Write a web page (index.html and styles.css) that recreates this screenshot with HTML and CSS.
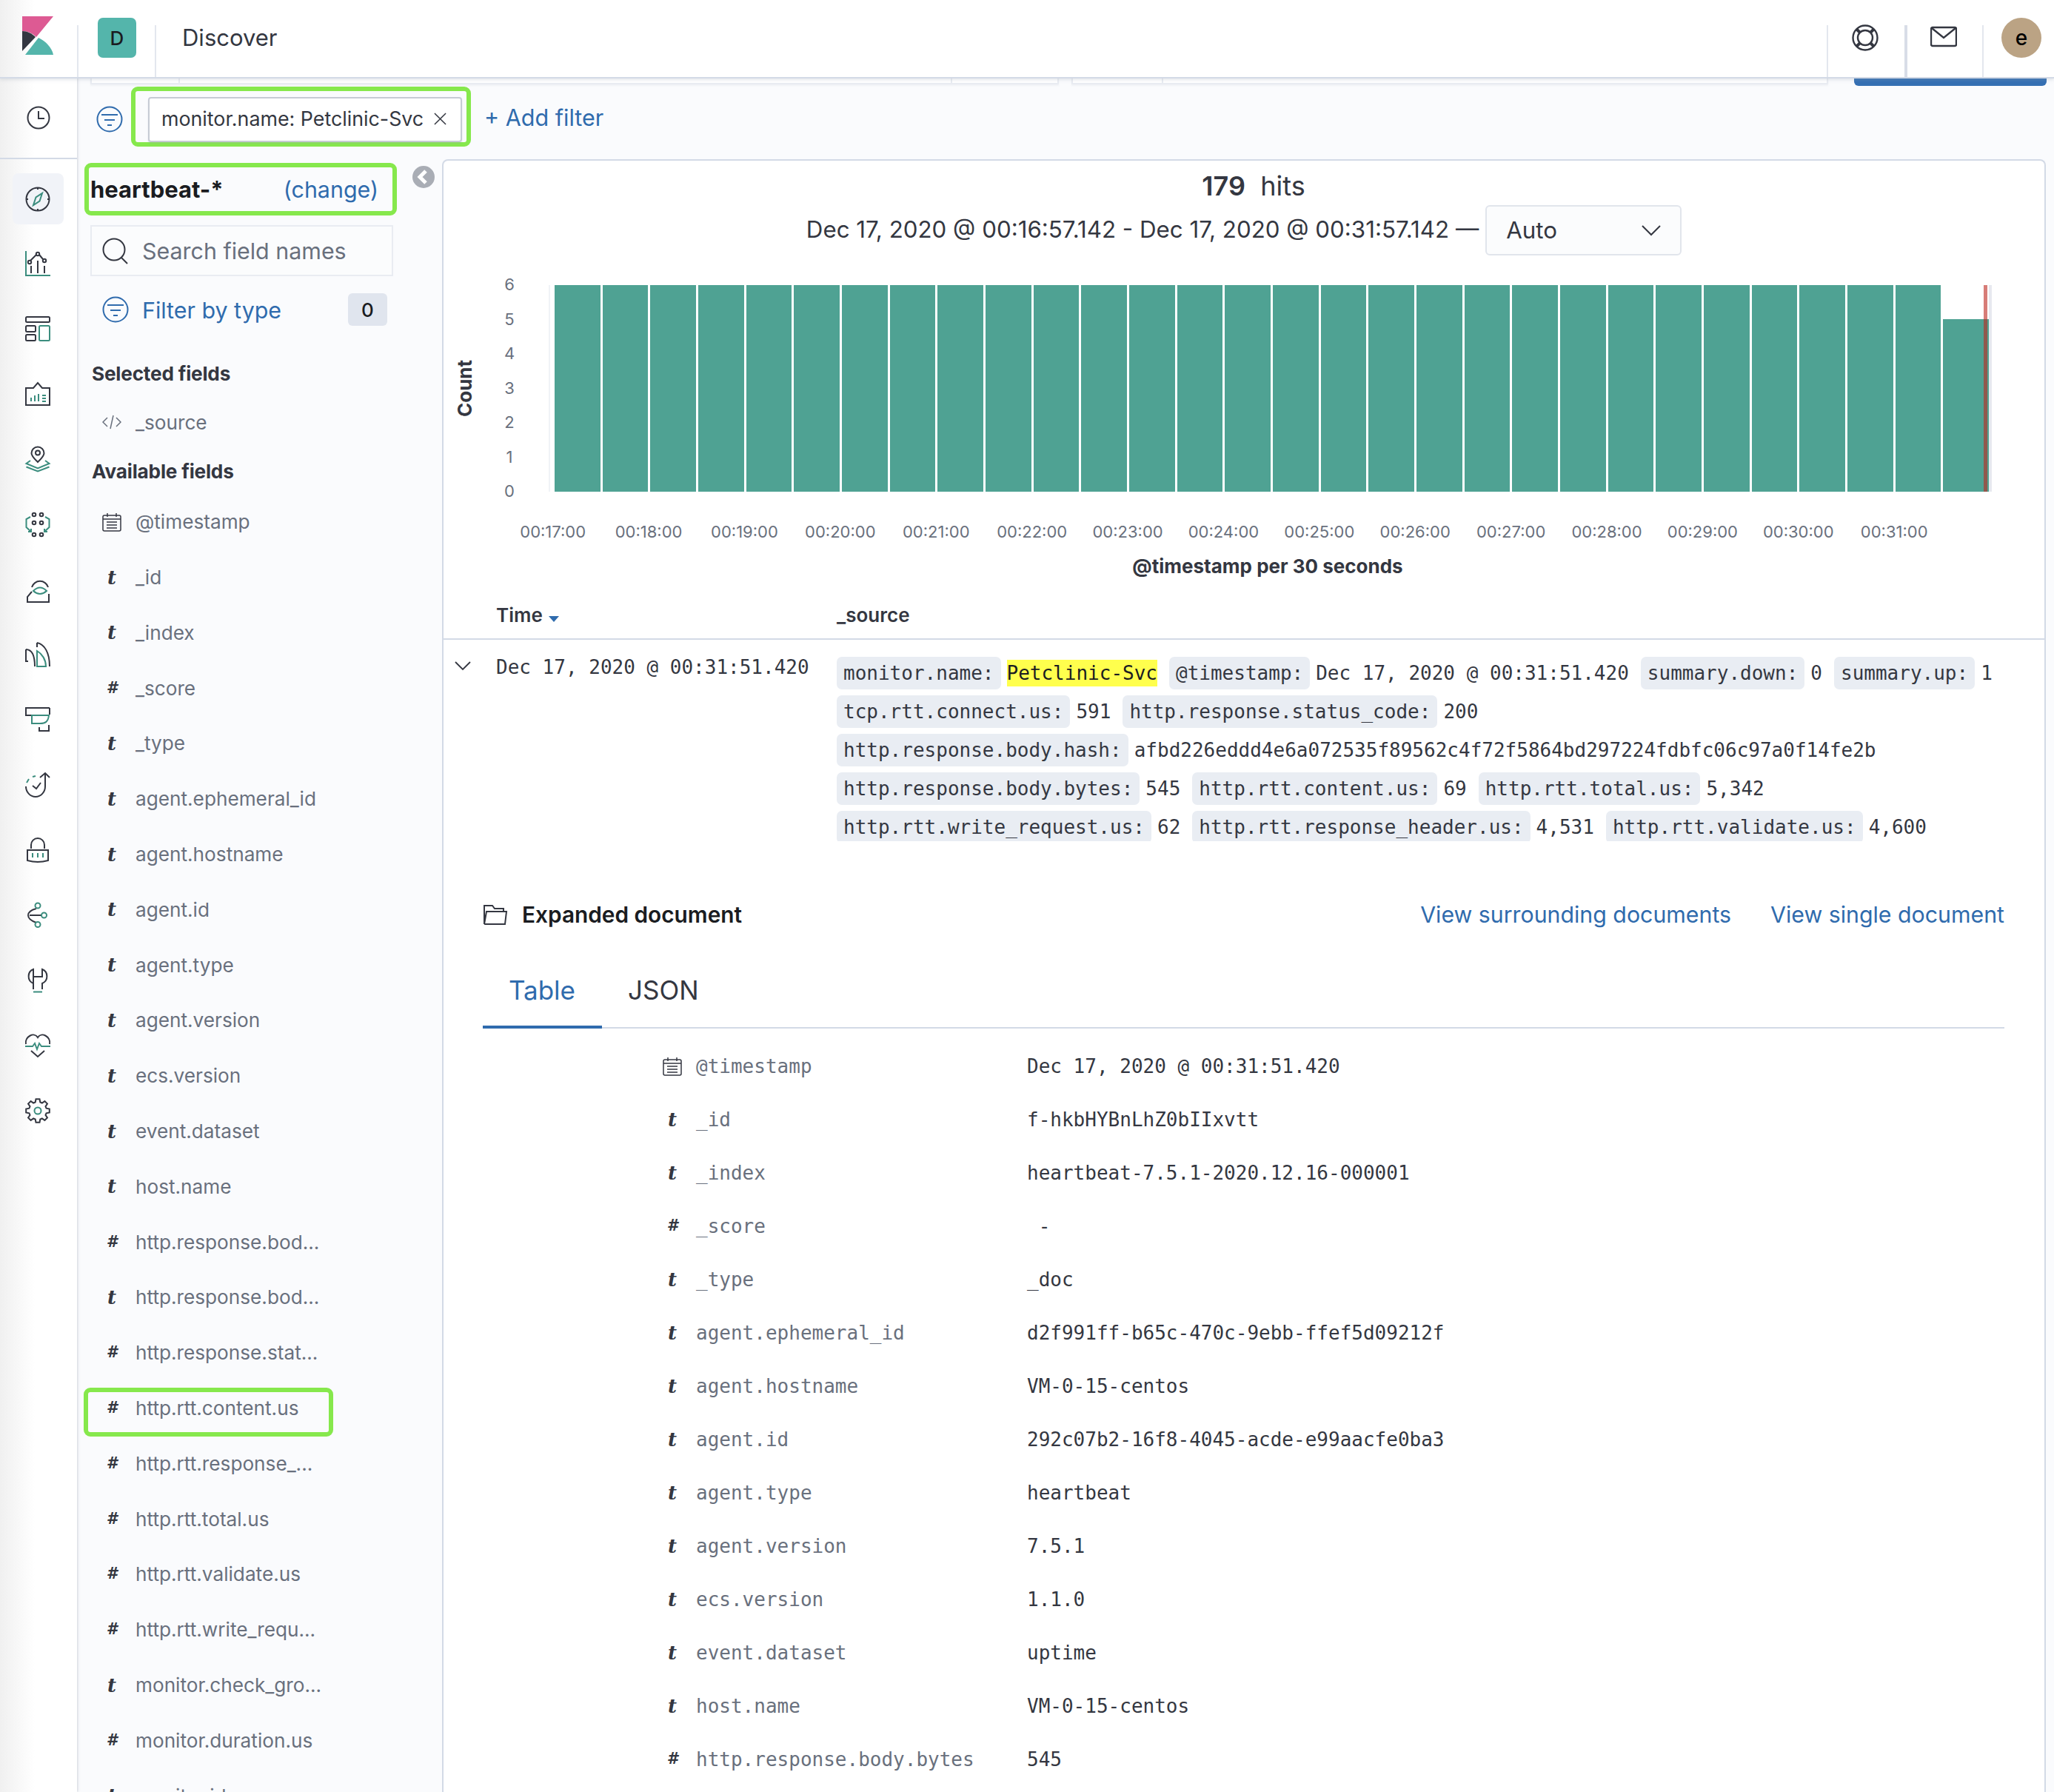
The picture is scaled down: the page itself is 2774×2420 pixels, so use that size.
FILE: index.html
```html
<!DOCTYPE html>
<html>
<head>
<meta charset="UTF-8">
<title>Discover - Kibana</title>
<link rel="stylesheet" href="styles.css">
</head>
<body>
<div class="page">

<header class="topbar">
<div class="logo-cell">
<svg class="logo" viewBox="0 0 42 52"><path fill="#dd5a93" d="M0 0H42L19 28C14 23 8 20 0 20Z"/><path fill="#343741" d="M0 20C7 20 13 23 18 28L0 47Z"/><path fill="#54b5ab" d="M22 29C32 34 40 42 42 52H4Z"/></svg>
</div>
<div class="space-cell"><div class="space-tile">D</div></div>
<div class="page-title">Discover</div>
<div class="top-spacer"></div>
<div class="top-cell"><svg class="top-icon help" viewBox="0 0 36 36"><circle cx="18" cy="18" r="16.5"/><circle cx="18" cy="18" r="10"/><path d="M6.500 6.500L11 11M29.500 6.500L25 11M6.500 29.500L11 25M29.500 29.500L25 25" stroke-width="4"/></svg></div>
<div class="top-cell thick"><svg class="top-icon mail" viewBox="0 0 36 30"><rect x="1" y="2" width="34" height="25" rx="2"/><path d="M2 3L18 16L34 3"/></svg></div>
<div class="top-cell avatar-cell"><div class="avatar">e</div></div>
</header>

<div class="workspace">
<nav class="sidenav">
<div class="nav-recent">
<svg class="nav-icon" viewBox="0 0 34 34"><circle cx="17" cy="17" r="14.5"/><path d="M17 8V18H25"/></svg>
</div>
<div class="nav-list">
<div class="nav-item active"><svg class="nav-icon" viewBox="0 0 34 34"><circle cx="17" cy="17" r="15.5"/><path d="M17 1V4M17 30V33M1 17H4M30 17H33"/><path class="teal" d="M23 9L19.5 19.5L11 25L14.5 14.5Z"/></svg></div>
<div class="nav-item"><svg class="nav-icon" viewBox="0 0 34 34"><path class="teal" d="M1 0V33H34"/><path d="M8 30V20M17 30V13M26 30V20"/><path d="M7 13L15 5M19 5L24 11"/><circle cx="6" cy="15" r="2.2"/><circle cx="17" cy="4" r="2.2"/><circle cx="26" cy="13" r="2.2"/></svg></div>
<div class="nav-item"><svg class="nav-icon" viewBox="0 0 34 34"><rect x="1" y="1" width="32" height="7" rx="1.5"/><rect x="1" y="13" width="13" height="8" rx="1.5"/><rect x="1" y="25" width="13" height="8" rx="1.5"/><rect class="teal" x="19" y="13" width="14" height="20" rx="1.5"/></svg></div>
<div class="nav-item"><svg class="nav-icon" viewBox="0 0 34 34"><path d="M1 9H11L17 2L23 9H33V32H1Z"/><path class="teal" d="M8 22V27M13 19V27M18 17V27M23 19H28M23 23H28M23 27H28"/></svg></div>
<div class="nav-item"><svg class="nav-icon" viewBox="0 0 34 34"><path d="M17 21C12 16 8.5 13 8.5 9A8.5 8.5 0 0 1 25.500 9C25.500 13 22 16 17 21Z"/><circle cx="17" cy="8.500" r="3"/><path class="teal" d="M7 19L1.500 23L17 29.500L32.500 23L27 19M1.500 27.500L17 33.500L32.500 27.500"/></svg></div>
<div class="nav-item"><svg class="nav-icon" viewBox="0 0 34 34"><circle cx="12" cy="4" r="2.300"/><circle cx="22" cy="4" r="2.300"/><circle cx="12" cy="15" r="2.300"/><circle cx="22" cy="15" r="2.300"/><circle cx="12" cy="31" r="2.300"/><circle cx="22" cy="31" r="2.300"/><path class="teal" d="M7 7L1.500 10V21L8 27M4 27H8V23M27 7L32.500 10V21L26 27M30 27H26V23"/></svg></div>
<div class="nav-item"><svg class="nav-icon" viewBox="0 0 34 34"><path d="M9 14A11.500 11.500 0 0 1 31 14M9 20L3 27V34H32V23"/><path class="teal" d="M11 19Q20 10 29 19Q20 27 11 19Z"/></svg></div>
<div class="nav-item"><svg class="nav-icon" viewBox="0 0 34 34"><path d="M1 10V26H4M1 10C8 10 13 17 13 33M16 1V7M16 1C26 3 33 14 33 33"/><path class="teal" d="M16 12V33H28C28 24 23 16 16 12Z"/></svg></div>
<div class="nav-item"><svg class="nav-icon" viewBox="0 0 34 34"><path d="M33 1H1V11H10M33 1V10M19 27V32H32V24"/><path class="teal" d="M9 11H32C31 20 27 22 20 22H9Z"/></svg></div>
<div class="nav-item"><svg class="nav-icon" viewBox="0 0 34 34"><path d="M20 7L27 1L33 7M27 1V19A13 14 0 0 1 1 19"/><path class="teal" d="M2 14L5 9M10 6L14 5"/><path d="M10 18L15 22L21 14"/></svg></div>
<div class="nav-item"><svg class="nav-icon" viewBox="0 0 34 34"><path d="M8 15V10A9 9 0 0 1 26 10V15M3 17H31V31Q17 35 3 31Z"/><path class="teal" d="M10 21V27M17 21V27M24 21V27"/></svg></div>
<div class="nav-item"><svg class="nav-icon" viewBox="0 0 34 34"><path d="M22 17H6M15 8Q4 11 4 17Q4 23 15 27"/><circle class="teal" cx="17" cy="4" r="3.500"/><circle class="teal" cx="25.500" cy="17" r="3.500"/><circle class="teal" cx="17" cy="29.500" r="3.500"/></svg></div>
<div class="nav-item"><svg class="nav-icon" viewBox="0 0 34 34"><path d="M11 2V12H23V2C31 5 32 17 23 21V29M11 29V21C2 17 3 5 11 2Z"/><path class="teal" d="M11 32.500H23"/></svg></div>
<div class="nav-item"><svg class="nav-icon" viewBox="0 0 34 34"><path d="M1 15C-1 5 12 -2 17 6C22 -2 35 5 33 15M8 24L17 32L26 24"/><path class="teal" d="M0 18H10L13 14L16 22L19 14L22 18H34"/></svg></div>
<div class="nav-item"><svg class="nav-icon" viewBox="0 0 34 34"><path d="M13.690 5.460L14.500 1.200H19.500L20.310 5.460L22.820 6.500L26.400 4.060L29.940 7.600L27.500 11.180L28.540 13.690L32.800 14.500V19.500L28.540 20.310L27.500 22.820L29.940 26.400L26.400 29.940L22.820 27.500L20.310 28.540L19.500 32.800H14.500L13.690 28.540L11.180 27.500L7.600 29.940L4.060 26.400L6.500 22.820L5.460 20.310L1.200 19.500V14.500L5.460 13.690L6.500 11.180L4.060 7.600L7.600 4.060L11.180 6.500Z"/><circle class="teal" cx="17" cy="17" r="4.500"/></svg></div>
</div>
</nav>

<main class="main">
<div class="query-stub">
<div class="query-box"><span class="stub-a"></span><span class="stub-b"></span></div>
<div class="query-box second"><span class="stub-c"></span></div>
<div class="update-btn"></div>
</div>

<div class="filter-row">
<svg class="filter-icon" viewBox="0 0 36 36"><circle cx="18" cy="18" r="16.500"/><path d="M7 12H29M11 19H25M15 26H21"/></svg>
<div class="green-box filter-green">
<div class="filter-chip">
<span class="chip-text">monitor.name: Petclinic-Svc</span>
<svg class="chip-x" viewBox="0 0 18 18"><path d="M1 1L17 17M17 1L1 17"/></svg>
</div>
</div>
<a class="add-filter">+ Add filter</a>
</div>

<div class="content">
<aside class="sidebar">
<div class="collapse-btn"><svg viewBox="0 0 30 30"><path d="M18 7L10 15L18 23"/></svg></div>
<div class="green-box index-green">
<span class="index-name">heartbeat-*</span>
<a class="index-change">(change)</a>
</div>
<div class="field-search">
<svg class="search-icon" viewBox="0 0 36 36"><circle cx="16" cy="16" r="14.500"/><path d="M26 27L34 35"/></svg>
<span>Search field names</span>
</div>
<div class="type-filter">
<svg class="filter-icon" viewBox="0 0 36 36"><circle cx="18" cy="18" r="16.500"/><path d="M7 12H29M11 19H25M15 26H21"/></svg>
<a class="type-label">Filter by type</a>
<span class="type-count">0</span>
</div>

<h3 class="field-head selected-head">Selected fields</h3>
<div class="field-row"><svg class="code-icon" viewBox="0 0 26 20"><path d="M7 4L1 10L7 16M19 4L25 10L19 16M15 1L11 19"/></svg><span class="field-name">_source</span></div>
<h3 class="field-head available-head">Available fields</h3>

<div class="field-list">
<div class="field-row"><svg class="cal-icon" viewBox="0 0 26 26"><rect x="1" y="4" width="24" height="21" rx="2"/><path d="M7 1V6M19 1V6M1 9H25M6 13H20M6 17H20M6 21H20"/></svg><span class="field-name">@timestamp</span></div>
<div class="field-row"><span class="type-t">t</span><span class="field-name">_id</span></div>
<div class="field-row"><span class="type-t">t</span><span class="field-name">_index</span></div>
<div class="field-row"><span class="type-n">#</span><span class="field-name">_score</span></div>
<div class="field-row"><span class="type-t">t</span><span class="field-name">_type</span></div>
<div class="field-row"><span class="type-t">t</span><span class="field-name">agent.ephemeral_id</span></div>
<div class="field-row"><span class="type-t">t</span><span class="field-name">agent.hostname</span></div>
<div class="field-row"><span class="type-t">t</span><span class="field-name">agent.id</span></div>
<div class="field-row"><span class="type-t">t</span><span class="field-name">agent.type</span></div>
<div class="field-row"><span class="type-t">t</span><span class="field-name">agent.version</span></div>
<div class="field-row"><span class="type-t">t</span><span class="field-name">ecs.version</span></div>
<div class="field-row"><span class="type-t">t</span><span class="field-name">event.dataset</span></div>
<div class="field-row"><span class="type-t">t</span><span class="field-name">host.name</span></div>
<div class="field-row"><span class="type-n">#</span><span class="field-name">http.response.bod...</span></div>
<div class="field-row"><span class="type-t">t</span><span class="field-name">http.response.bod...</span></div>
<div class="field-row"><span class="type-n">#</span><span class="field-name">http.response.stat...</span></div>
<div class="field-row picked">
<div class="green-box field-green"></div>
<span class="type-n">#</span><span class="field-name">http.rtt.content.us</span></div>
<div class="field-row"><span class="type-n">#</span><span class="field-name">http.rtt.response_...</span></div>
<div class="field-row"><span class="type-n">#</span><span class="field-name">http.rtt.total.us</span></div>
<div class="field-row"><span class="type-n">#</span><span class="field-name">http.rtt.validate.us</span></div>
<div class="field-row"><span class="type-n">#</span><span class="field-name">http.rtt.write_requ...</span></div>
<div class="field-row"><span class="type-t">t</span><span class="field-name">monitor.check_gro...</span></div>
<div class="field-row"><span class="type-n">#</span><span class="field-name">monitor.duration.us</span></div>
<div class="field-row"><span class="type-t">t</span><span class="field-name">monitor.id</span></div>
</div>
</aside>

<section class="panel">
<div class="hits"><b>179</b>&nbsp; hits</div>
<div class="range-row">
<span class="range-text">Dec 17, 2020 @ 00:16:57.142 - Dec 17, 2020 @ 00:31:57.142 —</span>
<div class="interval"><span>Auto</span><svg class="interval-arrow" viewBox="0 0 28 16"><path d="M2 2L14 14L26 2"/></svg></div>
</div>

<div class="chart">
<div class="count-label"><span>Count</span></div>
<div class="y-ticks"><span>6</span><span>5</span><span>4</span><span>3</span><span>2</span><span>1</span><span>0</span></div>
<div class="plot-wrap">
<div class="plot">
<i></i><i></i><i></i><i></i><i></i><i></i><i></i><i></i><i></i><i></i>
<i></i><i></i><i></i><i></i><i></i><i></i><i></i><i></i><i></i><i></i>
<i></i><i></i><i></i><i></i><i></i><i></i><i></i><i></i><i></i>
<i class="partial"></i>
<div class="now-line"></div>
</div>
<div class="x-ticks">
<span>00:17:00</span><span>00:18:00</span><span>00:19:00</span><span>00:20:00</span><span>00:21:00</span>
<span>00:22:00</span><span>00:23:00</span><span>00:24:00</span><span>00:25:00</span><span>00:26:00</span>
<span>00:27:00</span><span>00:28:00</span><span>00:29:00</span><span>00:30:00</span><span>00:31:00</span>
</div>
</div>
</div>
<div class="x-title">@timestamp per 30 seconds</div>

<div class="hit-head"><div class="hit-time">Time <span class="sort-arrow"></span></div><div>_source</div></div>
<div class="hit-row">
<svg class="hit-toggle" viewBox="0 0 22 14"><path d="M1 2L11 12L21 2"/></svg>
<div class="hit-date">Dec 17, 2020 @ 00:31:51.420</div>
<div class="source">
<div class="kv"><span class="key">monitor.name:</span><mark>Petclinic-Svc</mark></div>
<div class="kv"><span class="key">@timestamp:</span><span>Dec 17, 2020 @ 00:31:51.420</span></div>
<div class="kv"><span class="key">summary.down:</span><span>0</span></div>
<div class="kv"><span class="key">summary.up:</span><span>1</span></div>
<div class="kv"><span class="key">tcp.rtt.connect.us:</span><span>591</span></div>
<div class="kv"><span class="key">http.response.status_code:</span><span>200</span></div>
<div class="kv"><span class="key">http.response.body.hash:</span><span>afbd226eddd4e6a072535f89562c4f72f5864bd297224fdbfc06c97a0f14fe2b</span></div>
<div class="kv"><span class="key">http.response.body.bytes:</span><span>545</span></div>
<div class="kv"><span class="key">http.rtt.content.us:</span><span>69</span></div>
<div class="kv"><span class="key">http.rtt.total.us:</span><span>5,342</span></div>
<div class="kv"><span class="key">http.rtt.write_request.us:</span><span>62</span></div>
<div class="kv"><span class="key">http.rtt.response_header.us:</span><span>4,531</span></div>
<div class="kv"><span class="key">http.rtt.validate.us:</span><span>4,600</span></div>
</div>
</div>

<div class="doc">
<div class="doc-head">
<svg class="folder-icon" viewBox="0 0 34 30"><path d="M2 28V3H13L16 7H28V11M2 28H30L32 11H5L2 28"/></svg>
<span class="doc-title">Expanded document</span>
<a class="doc-link first">View surrounding documents</a>
<a class="doc-link">View single document</a>
</div>
<div class="tabs"><a class="tab on">Table</a><a class="tab">JSON</a></div>
<div class="doc-table">
<div class="doc-row"><svg class="cal-icon" viewBox="0 0 26 26"><rect x="1" y="4" width="24" height="21" rx="2"/><path d="M7 1V6M19 1V6M1 9H25M6 13H20M6 17H20M6 21H20"/></svg><span class="doc-key">@timestamp</span><span class="doc-val">Dec 17, 2020 @ 00:31:51.420</span></div>
<div class="doc-row"><span class="type-t">t</span><span class="doc-key">_id</span><span class="doc-val">f-hkbHYBnLhZ0bIIxvtt</span></div>
<div class="doc-row"><span class="type-t">t</span><span class="doc-key">_index</span><span class="doc-val">heartbeat-7.5.1-2020.12.16-000001</span></div>
<div class="doc-row"><span class="type-n">#</span><span class="doc-key">_score</span><span class="doc-val"> -</span></div>
<div class="doc-row"><span class="type-t">t</span><span class="doc-key">_type</span><span class="doc-val">_doc</span></div>
<div class="doc-row"><span class="type-t">t</span><span class="doc-key">agent.ephemeral_id</span><span class="doc-val">d2f991ff-b65c-470c-9ebb-ffef5d09212f</span></div>
<div class="doc-row"><span class="type-t">t</span><span class="doc-key">agent.hostname</span><span class="doc-val">VM-0-15-centos</span></div>
<div class="doc-row"><span class="type-t">t</span><span class="doc-key">agent.id</span><span class="doc-val">292c07b2-16f8-4045-acde-e99aacfe0ba3</span></div>
<div class="doc-row"><span class="type-t">t</span><span class="doc-key">agent.type</span><span class="doc-val">heartbeat</span></div>
<div class="doc-row"><span class="type-t">t</span><span class="doc-key">agent.version</span><span class="doc-val">7.5.1</span></div>
<div class="doc-row"><span class="type-t">t</span><span class="doc-key">ecs.version</span><span class="doc-val">1.1.0</span></div>
<div class="doc-row"><span class="type-t">t</span><span class="doc-key">event.dataset</span><span class="doc-val">uptime</span></div>
<div class="doc-row"><span class="type-t">t</span><span class="doc-key">host.name</span><span class="doc-val">VM-0-15-centos</span></div>
<div class="doc-row"><span class="type-n">#</span><span class="doc-key">http.response.body.bytes</span><span class="doc-val">545</span></div>
</div>
</div>
</section>
</div>
</main>
</div>
</div>
</body>
</html>
```

FILE: styles.css
```css
html,body{margin:0;padding:0;height:2420px;overflow:hidden;}
body{font-family:Inter,"Noto Sans",sans-serif;color:#343741;background:#fafbfd;}
a{color:#2f6bad;text-decoration:none;}
svg{display:block;flex:none;fill:none;stroke:#343741;stroke-width:2;}

.page{height:2420px;display:flex;flex-direction:column;overflow:hidden;}

/* top bar */
.topbar{height:104px;flex:none;display:flex;background:#fff;border-bottom:2px solid #d3dae6;box-sizing:content-box;margin-bottom:-2px;position:relative;z-index:2;box-shadow:0 2px 4px rgba(152,162,179,.25);}
.logo-cell{width:104px;flex:none;padding:22px 0 0 30px;box-sizing:border-box;background:linear-gradient(90deg,#f0f0f0,#fff 45%);}
.logo{width:42px;height:52px;stroke:none;}
.logo path{stroke:none;}
.space-cell{width:107px;flex:none;margin-top:34px;border-left:2px solid #e3e7ee;border-right:2px solid #e3e7ee;box-sizing:border-box;padding-left:26px;}
.space-tile{width:52px;height:54px;margin-top:-10px;border-radius:7px;background:#54b5ab;color:#1a1c21;font-size:26px;font-weight:500;display:flex;align-items:center;justify-content:center;}
.page-title{font-size:31px;line-height:102px;margin-left:35px;color:#343741;}
.top-spacer{flex:1;}
.top-cell{width:105px;flex:none;margin-top:34px;border-left:2px solid #e3e7ee;box-sizing:border-box;padding:0 0 0 32px;}
.top-cell.thick{border-left:4px solid #d8dde7;padding-left:31px;}
.top-icon{width:36px;stroke:#343741;stroke-width:2.4;}
.top-icon.help{height:36px;margin-top:-1px;}
.top-icon.mail{height:30px;margin-top:1px;}
.avatar-cell{width:97px;padding-left:24px;}
.avatar{width:54px;height:54px;margin-top:-10px;border-radius:50%;background:#bba384;color:#000;font-size:28px;font-weight:500;display:flex;align-items:center;justify-content:center;}

.workspace{flex:1;display:flex;min-height:0;}

/* left app nav */
.sidenav{width:104px;flex:none;background:linear-gradient(90deg,#f0f0f0,#fff 45%);box-shadow:1px 0 3px rgba(152,162,179,.45);position:relative;z-index:1;}
.nav-recent{height:109px;border-bottom:2px solid #d3dae6;display:flex;align-items:center;justify-content:center;box-sizing:content-box;}
.nav-list{padding-top:19px;display:flex;flex-direction:column;align-items:center;}
.nav-item{width:69px;height:88px;margin-left:-2px;display:flex;align-items:center;justify-content:center;border-radius:8px;}
.nav-item.active{height:69px;margin-bottom:9px;background:#f1f3f8;}
.nav-icon{width:34px;height:34px;overflow:visible;}
.nav-icon .teal{stroke:#3b8d7e;}

.main{flex:1;min-width:0;display:flex;flex-direction:column;}

/* what is left of the query bar, under the header */
.query-stub{height:12px;flex:none;display:flex;padding-left:18px;}
.query-box{width:1308px;height:10px;box-sizing:border-box;border:2px solid #e9ecf2;border-top:0;box-shadow:0 2px 2px rgba(152,162,179,.1);background:#fff;position:relative;flex:none;}
.query-box.second{width:1022px;margin-left:17px;}
.stub-a,.stub-b,.stub-c{position:absolute;top:0;bottom:0;width:2px;background:#e9ecf2;}
.stub-a{left:117px;}
.stub-b{left:1160px;}
.stub-c{left:120px;}
.update-btn{width:260px;height:12px;margin-left:35px;background:#3570b3;border-radius:0 0 6px 6px;flex:none;}

/* filter row */
.filter-row{height:99px;flex:none;display:flex;align-items:flex-start;padding-left:26px;box-sizing:border-box;}
.filter-icon{width:36px;height:36px;flex:none;stroke:#2f6bad;stroke-width:2;}
.filter-row>.filter-icon{margin-top:27px;}
.green-box{border:6px solid #86e84c;border-radius:9px;box-sizing:border-box;}
.filter-green{margin:1px 0 0 11px;width:459px;height:81px;padding:8px 6px 0 17px;}
.filter-chip{height:61px;box-sizing:border-box;border:2px solid #c6cbd4;border-radius:4px;background:#fff;display:flex;align-items:center;padding:0 0 3px 16px;box-shadow:0 2px 2px rgba(152,162,179,.25);}
.chip-text{font-size:26.8px;color:#343741;white-space:nowrap;}
.chip-x{width:17px;height:17px;margin-left:auto;margin-right:19px;stroke-width:1.6;}
.add-filter{font-size:30.5px;margin:24px 0 0 18px;line-height:38px;}

.content{flex:1;min-height:0;display:flex;}

/* field sidebar */
.sidebar{width:493px;flex:none;position:relative;box-sizing:border-box;overflow:hidden;}
.collapse-btn{position:absolute;left:453px;top:9px;width:30px;height:30px;border-radius:50%;background:#a9adb5;}
.collapse-btn svg{stroke:#fff;stroke-width:5;width:30px;height:30px;}
.index-green{margin:5px 0 0 10px;width:422px;height:71px;display:flex;align-items:center;justify-content:space-between;padding:0 19px 0 2px;}
.index-name{font-size:31px;font-weight:700;color:#1a1c21;}
.index-change{font-size:30.4px;}
.field-search{margin:13px 0 0 18px;width:409px;height:69px;box-sizing:border-box;border:2px solid #e9ecf2;background:#fbfcfd;display:flex;align-items:center;padding-left:14px;gap:18px;color:#69707d;font-size:30.4px;}
.search-icon{width:36px;height:36px;stroke-width:2;}
.type-filter{margin:23px 0 0 34px;height:44px;width:385px;display:flex;align-items:center;}
.type-label{font-size:30.4px;margin-left:18px;position:relative;top:1px;}
.type-count{margin-left:auto;width:53px;height:44px;border-radius:6px;background:#e0e5ee;display:flex;align-items:center;justify-content:center;font-size:26px;font-weight:500;color:#1a1c21;}
.field-head{margin:0 0 0 20px;height:40px;line-height:40px;font-size:26.2px;font-weight:700;letter-spacing:-.2px;color:#343741;}
.selected-head{margin-top:45px;}
.available-head{margin-top:9px;}
.field-row{height:74.8px;display:flex;align-items:center;padding-left:34px;position:relative;}
.selected-head + .field-row{margin-top:8px;}
.field-list{margin-top:10.600px;}
.field-name{font-size:26.2px;color:#69707d;position:absolute;left:79px;white-space:nowrap;}
.type-t,.type-n{width:26px;flex:none;text-align:center;font-style:italic;font-weight:700;color:#343741;line-height:1;}
.type-t{font-family:"DejaVu Serif",serif;font-size:26px;}
.type-n{font-family:"DejaVu Sans",sans-serif;font-size:21px;}
.code-icon{width:26px;height:20px;stroke:#69707d;stroke-width:1.500;}
.cal-icon{width:26px;height:26px;stroke:#343741;stroke-width:1.500;}
.field-green{position:absolute;left:9px;top:10px;width:337px;height:66px;}

/* chart panel */
.panel{flex:1;min-width:0;margin-right:11px;background:#fff;border:2px solid #d3dae6;border-bottom:0;border-radius:8px 8px 0 0;overflow:hidden;}
.hits{margin:12px 0 0 26px;height:44px;line-height:44px;text-align:center;font-size:36px;color:#343741;}
.hits b{font-weight:600;}
.range-row{margin-top:4px;height:68px;display:flex;align-items:center;justify-content:center;gap:9px;font-size:31.3px;color:#343741;}
.range-text{position:relative;top:-1px;}
.interval{width:265px;height:68px;box-sizing:border-box;border:2px solid #e1e5ec;border-radius:6px;background:#fbfcfd;display:flex;align-items:center;justify-content:space-between;padding:0 25px 0 26px;}
.interval-arrow{width:28px;height:16px;}

.chart{margin-top:40px;display:flex;align-items:flex-start;}
.count-label{width:26px;margin-left:16px;height:279px;display:flex;align-items:center;justify-content:center;}
.count-label span{transform:rotate(-90deg);font-size:26px;font-weight:700;white-space:nowrap;color:#343741;}
.y-ticks{width:26px;margin-left:34px;height:307px;margin-top:-15px;display:flex;flex-direction:column;justify-content:space-between;align-items:center;font-size:22px;line-height:28px;color:#69707d;}
.plot-wrap{margin-left:48px;width:1937px;}
.plot{height:279px;display:flex;align-items:flex-start;position:relative;box-shadow:-6px 0 0 #fff,-8px 0 0 #f0f3f7,4px 0 0 #e7e9ef;}
.plot i{flex:1;height:100%;background:#4fa293;margin-right:3px;}
.plot i.partial{height:233px;margin-top:46px;margin-right:0;}
.now-line{position:absolute;top:0;bottom:0;left:1930px;width:5px;background:rgba(189,39,30,.6);}
.x-ticks{display:flex;margin:40px 0 0 -67px;}
.x-ticks span{width:129.400px;flex:none;text-align:center;font-size:22px;line-height:28px;color:#69707d;}
.x-title{margin:19px 0 0 0;padding-left:64px;height:28px;line-height:28px;text-align:center;font-size:26px;font-weight:700;color:#343741;}

/* hit table */
.hit-head{margin-top:21px;height:60px;box-sizing:content-box;border-bottom:2px solid #d3dae6;display:flex;align-items:center;padding:0 0 2px 71px;font-size:26px;font-weight:600;color:#343741;}
.hit-time{width:460px;}
.sort-arrow{display:inline-block;width:0;height:0;margin-left:2px;border:7px solid transparent;border-top:8px solid #2f6bad;border-bottom:0;}
.hit-row{display:flex;align-items:flex-start;padding:20px 20px 0 0;font-family:"DejaVu Sans Mono",monospace;font-size:26px;color:#343741;}
.hit-toggle{width:22px;height:14px;margin:8px 0 0 15px;stroke-width:1.800;}
.hit-date{width:460px;margin-left:34px;line-height:34px;white-space:nowrap;}
.source{flex:1;min-width:0;height:249px;margin-top:3px;overflow:hidden;display:flex;flex-wrap:wrap;align-content:flex-start;column-gap:16px;row-gap:8px;}
.kv{display:flex;align-items:center;gap:8px;height:44px;white-space:nowrap;}
.key{height:44px;line-height:44px;padding:0 9px;background:#e9edf3;border-radius:7px;}
mark{background:#ffff4d;color:#1a1c21;height:36px;line-height:36px;}

/* expanded document */
.doc{margin:76.500px 54px 0 53px;}
.doc-head{height:44px;display:flex;align-items:center;font-size:30.3px;}
.folder-icon{width:34px;height:30px;}
.doc-title{margin-left:19px;font-size:29.8px;font-weight:600;color:#1a1c21;}
.doc-link{margin-left:53px;}
.doc-link.first{margin-left:auto;}
.tabs{margin-top:28px;height:104px;box-sizing:border-box;border-bottom:2px solid #d3dae6;display:flex;}
.tab{height:104px;box-sizing:border-box;padding:0 36px 0 35px;line-height:104px;font-size:35px;color:#343741;}
.tab + .tab{padding-left:35px;}
.tab.on{color:#2f6bad;border-bottom:4px solid #2f6bad;}
.doc-table{margin-top:15px;padding-left:243px;}
.doc-row{height:72px;display:flex;align-items:center;font-family:"DejaVu Sans Mono",monospace;font-size:26px;color:#343741;}
.doc-key{width:447px;margin-left:19px;flex:none;color:#69707d;}
.doc-val{white-space:pre;}
```
